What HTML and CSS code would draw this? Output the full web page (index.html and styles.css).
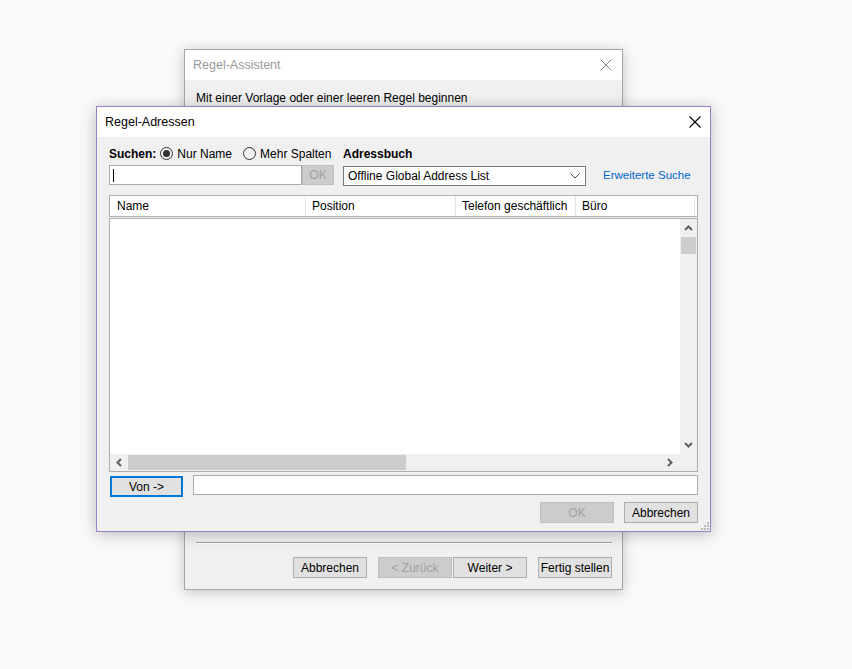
FILE: index.html
```html
<!DOCTYPE html>
<html lang="de">
<head>
    <meta charset="UTF-8">
    <title>Regel-Adressen</title>
    <link rel="stylesheet" href="styles.css">
</head>
<body>
    <div class="wiz">
        <div class="wiz-title">
            <span>Regel-Assistent</span>
            <svg class="x" width="12" height="12" viewBox="0 0 12 12"><path d="M0.5 0.5L11.5 11.5M11.5 0.5L0.5 11.5" stroke="#8a8a8a" stroke-width="1"/></svg>
        </div>
        <div class="wiz-body">
            <div class="wiz-head">Mit einer Vorlage oder einer leeren Regel beginnen</div>
        </div>
        <div class="wiz-foot">
            <div class="sep"></div>
            <div class="wiz-btns">
                <div class="btn">Abbrechen</div>
                <div class="btn off">&lt; Zurück</div>
                <div class="btn tight">Weiter &gt;</div>
                <div class="btn">Fertig stellen</div>
            </div>
        </div>
    </div>

    <div class="dlg">
        <div class="dlg-title">
            <span>Regel-Adressen</span>
            <svg class="x" width="12" height="12" viewBox="0 0 12 12"><path d="M0.5 0.5L11.5 11.5M11.5 0.5L0.5 11.5" stroke="#000" stroke-width="1.1"/></svg>
        </div>
        <div class="dlg-body">
            <div class="row1">
                <div class="left">
                    <b>Suchen:</b>
                    <span class="radio on"></span><span class="rl">Nur Name</span>
                    <span class="radio"></span><span class="rl">Mehr Spalten</span>
                </div>
                <b class="ab">Adressbuch</b>
            </div>
            <div class="row2">
                <div class="search"><span class="caret"></span></div>
                <div class="okbtn">OK</div>
                <div class="select">
                    <span>Offline Global Address List</span>
                    <svg width="10" height="6" viewBox="0 0 10 6"><path d="M0.5 0.5L5 5L9.5 0.5" stroke="#444" fill="none"/></svg>
                </div>
                <a class="link">Erweiterte Suche</a>
            </div>
            <div class="lhead">
                <div class="col c1">Name</div>
                <div class="col c2">Position</div>
                <div class="col c3">Telefon geschäftlich</div>
                <div class="col c4">Büro</div>
            </div>
            <div class="lbody">
                <div class="lmain">
                    <div class="area"></div>
                    <div class="vbar">
                        <svg class="arr" width="9" height="6" viewBox="0 0 9 6"><path d="M1 5L4.5 1.5L8 5" stroke="#606060" stroke-width="2" fill="none"/></svg>
                        <div class="vthumb"></div>
                        <div class="grow"></div>
                        <svg class="arr" width="9" height="6" viewBox="0 0 9 6"><path d="M1 1L4.5 4.5L8 1" stroke="#606060" stroke-width="2" fill="none"/></svg>
                    </div>
                </div>
                <div class="hbar">
                    <svg class="harr" width="6" height="9" viewBox="0 0 6 9"><path d="M5 1L1.5 4.5L5 8" stroke="#606060" stroke-width="2" fill="none"/></svg>
                    <div class="hthumb"></div>
                    <div class="grow"></div>
                    <svg class="harr" width="6" height="9" viewBox="0 0 6 9"><path d="M1 1L4.5 4.5L1 8" stroke="#606060" stroke-width="2" fill="none"/></svg>
                    <div class="corner"></div>
                </div>
            </div>
            <div class="row3">
                <div class="von">Von -&gt;</div>
                <div class="field"></div>
            </div>
            <div class="row4">
                <div class="btn off">OK</div>
                <div class="btn">Abbrechen</div>
            </div>
        </div>
        <svg class="grip" width="9" height="9" viewBox="0 0 9 9">
            <rect x="7" y="1" width="2" height="2" fill="#bbb"/>
            <rect x="4" y="4" width="2" height="2" fill="#bbb"/>
            <rect x="7" y="4" width="2" height="2" fill="#bbb"/>
            <rect x="1" y="7" width="2" height="2" fill="#bbb"/>
            <rect x="4" y="7" width="2" height="2" fill="#bbb"/>
            <rect x="7" y="7" width="2" height="2" fill="#bbb"/>
        </svg>
    </div>
</body>
</html>
```

FILE: styles.css
```css
*{
    margin: 0;
    padding: 0;
    box-sizing: border-box;
}
html,body{
    width: 100%;
    height: 100%;
    overflow: hidden;
}
body{
    position: relative;
    background: #f9f9f9;
    font-family: "Liberation Sans", Arial, sans-serif;
    font-size: 12px;
    color: #000;
}
/* back window */
.wiz{
    position: absolute;
    left: 184px;
    top: 49px;
    width: 439px;
    height: 541px;
    border: 1px solid #a6a6a6;
    background: #f0f0f0;
    display: flex;
    flex-direction: column;
    box-shadow: 0 2px 12px rgba(0,0,0,.22);
}
.wiz-title{
    height: 30px;
    background: #fff;
    display: flex;
    align-items: center;
    justify-content: space-between;
    padding: 0 10px 0 8px;
    color: #999;
    font-size: 12.5px;
}
.wiz-body{
    flex: 1;
    padding: 11px 11px 0 11px;
}
.wiz-foot{
    padding: 0 10px 11px 11px;
}
.sep{
    height: 2px;
    border-top: 1px solid #a0a0a0;
    border-bottom: 1px solid #fff;
    margin-bottom: 13px;
}
.wiz-btns{
    display: flex;
    justify-content: flex-end;
}
.btn{
    width: 74px;
    height: 21px;
    border: 1px solid #adadad;
    background: #e1e1e1;
    display: flex;
    align-items: center;
    justify-content: center;
    margin-left: 11px;
}
.btn.tight{
    margin-left: 1px;
}
.btn.off{
    background: #cccccc;
    border-color: #bfbfbf;
    color: #a0a0a0;
}
/* front dialog */
.dlg{
    position: absolute;
    left: 96px;
    top: 106px;
    width: 615px;
    height: 426px;
    border: 1px solid #9a80cc;
    background: #f0f0f0;
    box-shadow: 0 2px 14px rgba(0,0,0,.25);
}
.dlg-title{
    height: 30px;
    background: #fff;
    display: flex;
    align-items: center;
    justify-content: space-between;
    padding: 0 9px 0 8px;
    font-size: 12.5px;
}
.dlg-body{
    padding: 9px 12px 0 12px;
}
.row1{
    height: 15px;
    display: flex;
    align-items: center;
}
.row1 .left{
    width: 234px;
    display: flex;
    align-items: center;
}
.radio{
    width: 13px;
    height: 13px;
    border: 1px solid #333;
    border-radius: 50%;
    margin: 0 4px 0 4px;
    display: flex;
    align-items: center;
    justify-content: center;
}
.radio.on::after{
    content: "";
    width: 7px;
    height: 7px;
    border-radius: 50%;
    background: #333;
}
.rl + .radio{
    margin-left: 11px;
}
.row2{
    margin-top: 4px;
    height: 20px;
    display: flex;
    align-items: center;
}
.search{
    width: 193px;
    height: 20px;
    border: 1px solid #ababab;
    background: #fff;
    padding: 3px 0 0 3px;
}
.caret{
    display: block;
    width: 1px;
    height: 13px;
    background: #000;
}
.okbtn{
    width: 32px;
    height: 20px;
    background: #cccccc;
    border: 1px solid #bfbfbf;
    color: #a0a0a0;
    display: flex;
    align-items: center;
    justify-content: center;
}
.select{
    margin: 1px 0 0 9px;
    width: 243px;
    height: 20px;
    border: 1px solid #7a7a7a;
    background: #fff;
    display: flex;
    align-items: center;
    justify-content: space-between;
    padding: 0 5px 0 4px;
}
.link{
    margin-left: 17px;
    color: #0066cc;
    font-size: 11.5px;
}
.lhead{
    margin-top: 10px;
    height: 22px;
    border: 1px solid #adadad;
    background: #fff;
    display: flex;
}
.col{
    height: 20px;
    line-height: 20px;
    padding-left: 7px;
    border-right: 1px solid #e5e5e5;
}
.c1{ width: 196px; }
.c2{ width: 150px; padding-left: 6px; }
.c3{ width: 120px; padding-left: 6px; }
.c4{ width: 119px; padding-left: 6px; }
.lbody{
    margin-top: 1px;
    height: 254px;
    border: 1px solid #adadad;
    background: #fff;
    display: flex;
    flex-direction: column;
}
.lmain{
    flex: 1;
    display: flex;
}
.area{
    flex: 1;
}
.vbar{
    width: 17px;
    background: #f0f0f0;
    display: flex;
    flex-direction: column;
    align-items: center;
}
.vbar .arr{
    margin: 6px 0;
}
.vthumb{
    width: 15px;
    height: 17px;
    background: #cdcdcd;
}
.grow{
    flex: 1;
}
.hbar{
    height: 17px;
    background: #f0f0f0;
    display: flex;
    align-items: center;
}
.harr{
    margin: 0 6px;
}
.hthumb{
    width: 278px;
    height: 15px;
    background: #cdcdcd;
}
.corner{
    width: 17px;
    height: 17px;
    margin-left: 1px;
}
.row3{
    margin-top: 3px;
    display: flex;
    align-items: flex-start;
}
.von{
    margin: 1px 0 0 1px;
    width: 73px;
    height: 21px;
    border: 2px solid #0078d7;
    background: #e1e1e1;
    display: flex;
    align-items: center;
    justify-content: center;
}
.field{
    margin-left: 10px;
    flex: 1;
    height: 20px;
    border: 1px solid #ababab;
    background: #fff;
}
.row4{
    margin-top: 5px;
    display: flex;
    justify-content: flex-end;
}
.row4 .btn{
    height: 21px;
    margin-left: 10px;
}
.grip{
    position: absolute;
    right: 1px;
    bottom: 1px;
}
```
